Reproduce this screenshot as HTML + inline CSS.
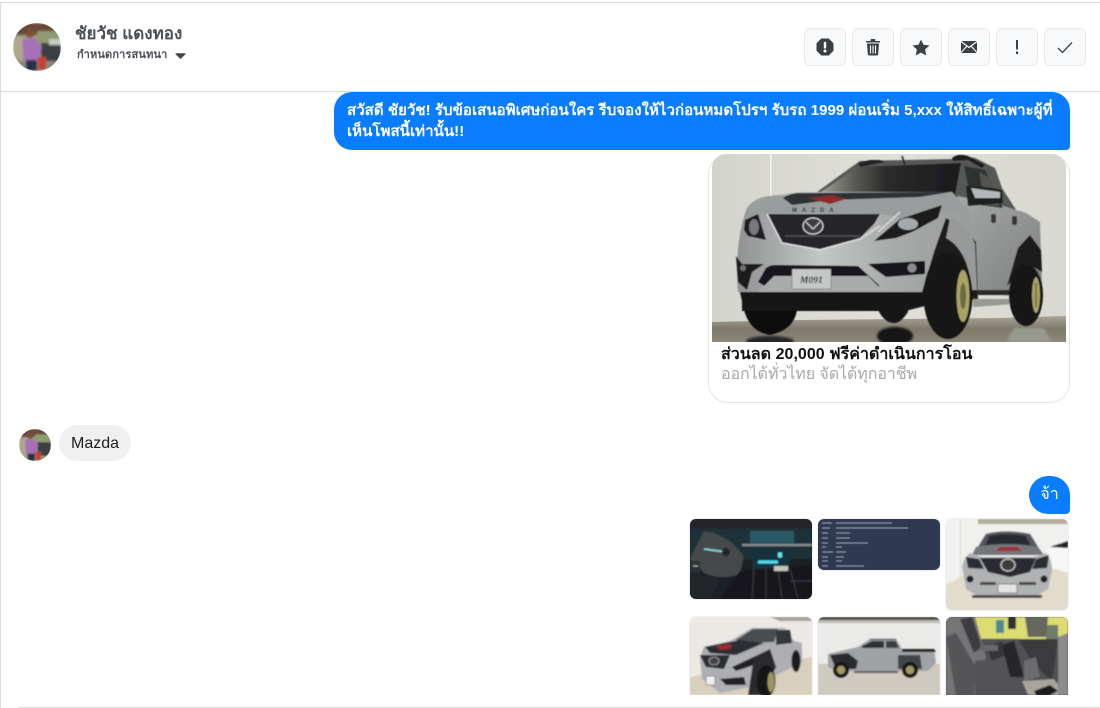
<!DOCTYPE html>
<html><head><meta charset="utf-8">
<style>
html,body{margin:0;padding:0;background:#fff}
body{width:1100px;height:708px;overflow:hidden;position:relative;font-family:"Liberation Sans",sans-serif}
.a{position:absolute}
.btn{position:absolute;top:28px;width:40px;height:36px;background:#f8f9fa;border:1px solid #e8e9ea;border-radius:6px;display:flex;align-items:center;justify-content:center}
.th{position:absolute;width:122px;overflow:hidden;border-radius:6px;box-shadow:0 0 0 1px rgba(0,0,0,.06)}
.th svg{display:block}
</style></head><body>
<svg width="0" height="0" style="position:absolute"><defs>
<filter id="b2"><feGaussianBlur stdDeviation=".7"/></filter>
<filter id="b1"><feGaussianBlur stdDeviation=".55"/></filter>
<filter id="b3" x="-10%" y="-10%" width="120%" height="120%"><feGaussianBlur stdDeviation="1.100"/></filter>
</defs></svg>
<div class="a" style="left:0;top:2px;width:1100px;height:1px;background:#ddd"></div>
<div class="a" style="left:0;top:2px;width:1px;height:706px;background:#ddd"></div>
<div class="a" style="left:1px;top:91px;width:1099px;height:1px;background:#ddd"></div>
<div class="a" style="left:18px;top:707px;width:1082px;height:1px;background:#ddd"></div>

<svg class="a" style="left:13px;top:23px" width="48" height="48" viewBox="0 0 48 48"><defs><clipPath id="c1"><circle cx="24" cy="24" r="24"/></clipPath></defs><g clip-path="url(#c1)"><g filter="url(#b3)"><rect width="48" height="48" fill="#9b9a84"/><rect y="0" width="48" height="12" fill="#6a4a3a"/><rect x="24" y="8" width="24" height="14" fill="#8f9a70"/><rect x="28" y="20" width="20" height="20" fill="#3a3f42"/><rect x="36" y="16" width="12" height="6" fill="#c8ccc4"/><rect x="0" y="14" width="10" height="26" fill="#b0a68a"/><rect x="0" y="38" width="48" height="10" fill="#8a887c"/><ellipse cx="17" cy="10" rx="4.500" ry="5" fill="#7c5034"/><path d="M9 17L22 15L29 24L25 38H11Z" fill="#a86fb8"/><rect x="13" y="37" width="11" height="11" fill="#26304a"/><rect x="25" y="34" width="8" height="13" fill="#c9412f"/></g></g></svg>
<div class="a" style="left:75px;top:24px;font-size:17px;font-weight:700;color:#4b4f56;line-height:20px;white-space:nowrap">ชัยวัช แดงทอง</div>
<div class="a" style="left:77px;top:48px;font-size:11px;font-weight:700;color:#4b4f56;line-height:14px;white-space:nowrap;letter-spacing:.15px">กำหนดการสนทนา</div>
<svg class="a" style="left:175px;top:53px" width="11" height="6" viewBox="0 0 11 6"><path d="M1 .8H10L5.500 5.200Z" fill="#444" stroke="#444" stroke-width="1.200" stroke-linejoin="round"/></svg>

<div class="btn" style="left:804px"><svg width="18" height="18" viewBox="0 0 18 18"><path d="M5.500 1H12.500L17 5.500V12.500L12.500 17H5.500L1 12.500V5.500Z" fill="#3d4043" stroke="#3d4043" stroke-width="1" stroke-linejoin="round"/><rect x="7.800" y="3.800" width="2.400" height="6.800" rx="1" fill="#fff"/><circle cx="9" cy="13" r="1.500" fill="#fff"/></svg></div>
<div class="btn" style="left:852px"><svg width="16" height="18" viewBox="0 0 16 18"><path d="M1 3H15V4.500H1ZM5.500 3L6 1H10L10.500 3Z" fill="#3d4043"/><path d="M2 5.500H14L13.200 16.300Q13 17.500 11.800 17.500H4.200Q3 17.500 2.800 16.300Z" fill="#3d4043"/><path d="M5.500 7.500V15.500M8 7.500V15.500M10.500 7.500V15.500" stroke="#fff" stroke-width="1.100"/></svg></div>
<div class="btn" style="left:900px"><svg width="18" height="17" viewBox="0 0 18 17"><path d="M9 0.500L11.500 5.700L17.500 6.500L13.100 10.500L14.300 16.500L9 13.600L3.700 16.500L4.900 10.500L0.500 6.500L6.500 5.700Z" fill="#3d4043"/></svg></div>
<div class="btn" style="left:948px"><svg width="16" height="12" viewBox="0 0 16 12"><rect width="16" height="12" rx="1" fill="#3d4043"/><path d="M0 .5L8 6.500L16 .5M0 11.500L6 5M16 11.500L10 5" stroke="#fff" stroke-width="1.100" fill="none"/></svg></div>
<div class="btn" style="left:996px"><svg width="4" height="14" viewBox="0 0 4 14"><rect x="1" y="0" width="2" height="9.500" fill="#3d4043"/><rect x="1" y="11.500" width="2" height="2.500" fill="#3d4043"/></svg></div>
<div class="btn" style="left:1044px"><svg width="16" height="13" viewBox="0 0 16 13"><path d="M1 7L5.500 11.500L15 1.500" stroke="#3d4043" stroke-width="1.300" fill="none"/></svg></div>

<div class="a" style="left:334px;top:92px;width:736px;height:58px;box-sizing:border-box;background:#0a7cff;border-radius:18px 18px 4px 18px;color:#fff;font-size:15px;font-weight:700;line-height:21px;padding:8px 13px;letter-spacing:.05px">สวัสดี ชัยวัช! รับข้อเสนอพิเศษก่อนใคร รีบจองให้ไวก่อนหมดโปรฯ รับรถ 1999 ผ่อนเริ่ม 5,xxx ให้สิทธิ์เฉพาะผู้ที่เห็นโพสนี้เท่านั้น!!</div>

<div class="a" style="left:708px;top:154px;width:362px;height:249px;box-sizing:border-box;border:1px solid #e4e4e4;border-top-color:#eee;border-radius:20px"></div>
<div class="a" style="left:712px;top:154px;width:354px;height:188px;overflow:hidden;border-radius:14px 14px 0 0">
<svg width="354" height="188" viewBox="712 154 354 188" style="display:block">
<defs>
<linearGradient id="wall" x1="0" x2="1" y1="0" y2="0"><stop offset="0" stop-color="#d4d4cd"/><stop offset=".5" stop-color="#e0e0d9"/><stop offset="1" stop-color="#d8d8d0"/></linearGradient>
<linearGradient id="floor" x1="0" x2="0" y1="0" y2="1"><stop offset="0" stop-color="#a8a498"/><stop offset=".5" stop-color="#7d7869"/><stop offset="1" stop-color="#8b8779"/></linearGradient>
<linearGradient id="front" x1="0" x2="1" y1="0" y2="0"><stop offset="0" stop-color="#8f9192"/><stop offset=".35" stop-color="#c4c6c6"/><stop offset=".65" stop-color="#a8aaaa"/><stop offset="1" stop-color="#9a9c9c"/></linearGradient>
<linearGradient id="side" x1="0" x2="1" y1="0" y2="1"><stop offset="0" stop-color="#a8aaa9"/><stop offset="1" stop-color="#7c7f7e"/></linearGradient>
<linearGradient id="glass" x1="0" x2="1" y1="0" y2="0"><stop offset="0" stop-color="#b0b3a6"/><stop offset=".28" stop-color="#5a5c56"/><stop offset=".5" stop-color="#2a2b2b"/><stop offset="1" stop-color="#1a1b1c"/></linearGradient>
</defs>
<rect x="712" y="154" width="354" height="188" fill="url(#wall)"/>
<rect x="770" y="154" width="1.500" height="50" fill="#f3f3ee"/>
<path d="M712 322L800 320L1000 318L1066 316V342H712Z" fill="url(#floor)"/>
<g filter="url(#b3)">
<path d="M1014 328L1044 328L1052 342H1006Z" fill="#97998f"/>
<ellipse cx="895" cy="336" rx="18" ry="9" fill="#191919"/>
<ellipse cx="770" cy="341" rx="24" ry="5" fill="#26262a"/>
</g>
<g filter="url(#b1)">
<!-- cab -->
<path d="M806 200L850 168L860 161L953 159L958 155L975 158L995 168L1002 188L1018 213L970 210L958 198Z" fill="#565856"/>
<path d="M952 158Q958 153 968 156L985 165L982 168L968 160L953 161Z" fill="#1e1e1e"/>
<path d="M858 163L870 160H880L885 162L860 167Z" fill="#222"/>
<path d="M812 198L858 167L961 163L955 195L880 192Z" fill="url(#glass)"/>
<path d="M902 156L905 165" stroke="#222" stroke-width="1.500"/>
<!-- side body -->
<path d="M958 196L1000 205L1026 213L1040 222L1042 290L1010 296L975 292L950 220Z" fill="url(#side)"/>
<path d="M964 166L985 170L1003 208L972 204Z" fill="#2f3031"/>
<path d="M979 172L990 178L1000 206L985 205Z" fill="#525250"/>
<path d="M966 186Q985 186 1002 190L1003 203L968 206Z" fill="#1f2021"/>
<path d="M971 188L1000 192L1000 198L975 198Z" fill="#b4b8b8"/>
<rect x="991" y="214" width="5" height="9" rx="2" fill="#383838"/><rect x="1012" y="216" width="5" height="9" rx="2" fill="#383838"/>
<!-- main body -->
<path d="M738 292C735 262 739 228 747 208Q755 197 770 196L800 192H952L970 212L976 292Z" fill="url(#front)"/>
<path d="M748 212Q755 198 770 196L950 192L965 210L905 218L880 214L760 213Z" fill="#9a9d9d"/>
<path d="M783 198Q790 193 800 193L950 192L920 197L830 200L792 205Z" fill="#2e3034"/>
<path d="M808 198L832 195L846 199L830 204Z" fill="#8f2a2f"/>
<text x="792" y="212" font-size="6" font-weight="700" letter-spacing="5" fill="#26262a" font-family="Liberation Sans">MAZDA</text>
<!-- grille -->
<path d="M768 214H880L874 224L860 238L820 249L782 243Z" fill="#26282c"/>
<path d="M767 214L782 243L820 250L860 239L880 226" fill="none" stroke="#dcdede" stroke-width="1.400"/>
<path d="M785 236H860" stroke="#55575a" stroke-width="1.200"/>
<ellipse cx="813" cy="226" rx="10" ry="8" fill="#3a3c40" stroke="#d4d6d6" stroke-width="1.200"/>
<path d="M806 222L813 229L820 222" fill="none" stroke="#ddd" stroke-width="1"/>
<!-- headlights -->
<path d="M745 220L758 214L766 240L748 236L744 230Z" fill="#1d1e20"/>
<ellipse cx="754" cy="227" rx="5" ry="8" fill="#77797c"/>
<path d="M874 241L900 219L942 205L938 218L912 232L896 238Z" fill="#1a1b1e"/>
<ellipse cx="908" cy="224" rx="10" ry="6" fill="#a4a9ad"/>
<path d="M878 232L900 212" stroke="#d8dada" stroke-width="1.500"/>
<!-- bumper dark -->
<path d="M736 256L738 282L747 290L752 272L764 264H742Z" fill="#1d1d1f"/>
<circle cx="743" cy="268" r="3" fill="#6f7070"/>
<path d="M766 268Q770 265 775 265L858 266L880 286L860 288H768L758 282Z" fill="#18181a"/>
<path d="M758 292L774 276H868L885 293Z" fill="#a9abab"/>
<path d="M868 264L925 261L925 274L886 277Z" fill="#18191a"/>
<circle cx="912" cy="268" r="5" fill="#8a8c8e" stroke="#222"/>
<rect x="792" y="269" width="39" height="20" fill="#c6c8c8" stroke="#777" stroke-width=".6"/>
<text x="800" y="283" font-size="9.500" font-weight="700" font-style="italic" fill="#1a1a1a" font-family="Liberation Serif">M091</text>
<!-- lower black -->
<path d="M740 292H797V310Q794 330 770 335Q750 332 744 310Z" fill="#101010"/>
<path d="M878 300H908V312Q900 324 893 323Q884 322 878 310Z" fill="#141414"/>
<path d="M742 292H925V306L905 311H742Z" fill="#121213"/>
<!-- flare / arch -->
<path d="M922 292L934 252L946 218L960 226L976 242L978 300L950 300Z" fill="#1c1d1e"/>
<path d="M950 218Q966 222 975 244L977 290L972 290Q968 250 946 238Z" fill="#97999a"/>
<path d="M1007 286L1018 248L1030 235L1041 250L1042 272L1028 264Z" fill="#1b1c1d"/>
<path d="M975 290H1013L1010 295H978Z" fill="#29292a"/>
<path d="M973 299H1016L1015 304L973 307Z" fill="#97998f"/>
<!-- wheels -->
<ellipse cx="948" cy="296" rx="24.500" ry="43" fill="#121212"/>
<ellipse cx="963" cy="296" rx="6.500" ry="26" fill="#a9a266"/>
<ellipse cx="963" cy="296" rx="3" ry="13" fill="#6d6a42"/>
<ellipse cx="1026" cy="295" rx="17" ry="31" fill="#121212"/>
<ellipse cx="1036" cy="295" rx="4" ry="18" fill="#a9a266"/>
<path d="M1036 283V307" stroke="#6d6a42" stroke-width="1.500"/>
</g>
</svg></div>
<div class="a" style="left:721px;top:345px;font-size:16px;font-weight:700;color:#111;line-height:20px;white-space:nowrap;letter-spacing:.04px">ส่วนลด 20,000 ฟรีค่าดำเนินการโอน</div>
<div class="a" style="left:721px;top:365px;font-size:16px;color:#a8a8a8;line-height:20px;white-space:nowrap;letter-spacing:-.08px">ออกได้ทั่วไทย จัดได้ทุกอาชีพ</div>

<svg class="a" style="left:19px;top:429px" width="32" height="32" viewBox="0 0 48 48"><defs><clipPath id="c2"><circle cx="24" cy="24" r="24"/></clipPath></defs><g clip-path="url(#c2)"><g filter="url(#b3)"><rect width="48" height="48" fill="#9b9a84"/><rect y="0" width="48" height="12" fill="#6a4a3a"/><rect x="24" y="8" width="24" height="14" fill="#8f9a70"/><rect x="28" y="20" width="20" height="20" fill="#3a3f42"/><rect x="0" y="14" width="10" height="26" fill="#b0a68a"/><ellipse cx="17" cy="10" rx="4.500" ry="5" fill="#7c5034"/><path d="M9 17L22 15L29 24L25 38H11Z" fill="#a86fb8"/><rect x="13" y="37" width="11" height="11" fill="#26304a"/><rect x="25" y="34" width="8" height="13" fill="#c9412f"/></g></g></svg>
<div class="a" style="left:59px;top:425px;width:72px;height:36px;background:#f0f0f0;border-radius:18px;font-size:16px;line-height:37px;text-align:center;color:#1c1e21">Mazda</div>

<div class="a" style="left:1029px;top:476px;width:41px;height:38px;background:#0a7cff;border-radius:19px 19px 4px 19px;color:#fff;font-size:16px;line-height:38px;text-align:center">จ้า</div>

<div class="a" style="left:0;top:510px;width:1100px;height:185px;overflow:hidden">
<!-- dash -->
<div class="th" style="left:690px;top:9px;height:80px"><svg width="122" height="80" viewBox="0 0 122 80"><rect width="122" height="80" fill="#1b2125"/><g filter="url(#b2)"><rect width="122" height="10" fill="#26282a"/><path d="M0 10H122V40H0Z" fill="#1f3038"/><path d="M0 40L14 12Q40 16 54 38L50 55Q30 62 14 54Z" fill="#44494b"/><path d="M14 30L36 33" stroke="#8fe3ee" stroke-width="1.500"/><circle cx="36" cy="33" r="4" fill="#23282a"/><path d="M52 26H122" stroke="#8a9092" stroke-width="2.200"/><path d="M60 12H104V24H60Z" fill="#2c5a68"/><path d="M62 30H100V50H62Z" fill="#12303c"/><path d="M68 43H88" stroke="#4fdcf0" stroke-width="3"/><path d="M88 36H92" stroke="#6ee" stroke-width="5"/><path d="M50 52L122 46V80H30Z" fill="#15181b"/><path d="M0 55L30 60L20 80H0Z" fill="#22272a"/><path d="M64 50L62 80M76 50L76 80M88 50L92 80M100 50L108 80" stroke="#343a3b" stroke-width="1.200"/><rect x="84" y="47" width="14" height="5" fill="#c4c7b8"/><rect x="0" y="42" width="10" height="12" fill="#2c3337"/><path d="M3 47H8" stroke="#bbb"/><path d="M100 62H122" stroke="#556" opacity=".6"/></g></svg></div>
<!-- info -->
<div class="th" style="left:818px;top:9px;height:51px"><svg width="122" height="51" viewBox="0 0 122 51"><rect width="122" height="51" fill="#2f3a52"/><g stroke="#b4bac6" stroke-width="1" filter="url(#b1)" opacity=".9"><path d="M4 4H14M18 4H74"/><path d="M4 9H12M18 9H90"/><path d="M4 14H10M18 14H32"/><path d="M4 19H10M18 19H32"/><path d="M4 24H10M18 24H50"/><path d="M4 28H8M18 28H24"/><path d="M4 33H15M18 33H28"/><path d="M4 38H10M18 38H26"/><path d="M4 42H10M18 42H24"/><path d="M4 47H10M18 47H46"/></g></svg></div>
<!-- front -->
<div class="th" style="left:946px;top:9px;height:91px"><svg width="122" height="91" viewBox="0 0 122 91"><rect width="122" height="91" fill="#f0f0ee"/><g filter="url(#b2)"><path d="M32 0H122V5H32Z" fill="#b5ae9e"/><rect x="14" y="0" width="1" height="62" fill="#d9d9d6"/><path d="M0 66L30 50H122V91H0Z" fill="#e3dbcc"/><path d="M100 32Q110 24 122 22V54L104 48Z" fill="#f7f7f7"/><path d="M104 28L122 22V29Z" fill="#222"/><path d="M32 28L40 15Q60 10 84 15L92 28Z" fill="#55575a"/><path d="M39 27L43 17Q60 13 80 17L85 27Z" fill="#2a2c30"/><path d="M30 28Q60 22 92 28L98 36H26Z" fill="#75777a"/><path d="M50 32H76L72 28H54Z" fill="#9c3034"/><path d="M16 48Q18 38 24 34L36 38H88L100 34Q106 40 106 52L102 70L92 76H30L20 70Z" fill="#b0b2b4"/><path d="M34 39H90L84 53L64 58L42 53Z" fill="#2a2c30"/><ellipse cx="62" cy="46" rx="7" ry="6" fill="#3b3d40" stroke="#e0e0e0"/><path d="M20 38L33 40L38 50L22 49Z" fill="#2b2d30"/><path d="M90 40L103 36L101 49L86 50Z" fill="#2b2d30"/><rect x="52" y="65" width="19" height="9" fill="#e4e4e3" stroke="#333" stroke-width=".5"/><circle cx="24" cy="60" r="3.500" fill="#222"/><circle cx="98" cy="60" r="3.500" fill="#222"/><path d="M34 63H50V66H34ZM73 63H90V66H73Z" fill="#444"/><path d="M26 76H96V79H26Z" fill="#4a4a4a"/></g></svg></div>
<!-- three quarter -->
<div class="th" style="left:690px;top:107px;height:78px;border-radius:6px 6px 0 0"><svg width="122" height="78" viewBox="0 0 122 78"><rect width="122" height="78" fill="#ece9e5"/><g filter="url(#b2)"><path d="M0 60L122 40V78H0Z" fill="#d8cfbc"/><path d="M80 0H122V4H90Z" fill="#a9a399"/><path d="M40 24L62 11H95L104 24L112 26L112 46L60 70L30 76L12 62L10 40L14 30Z" fill="#adafb2"/><path d="M46 23L63 12L88 12L84 25L50 26Z" fill="#4a4d50"/><path d="M86 13H100L102 26L86 28Z" fill="#35373a"/><path d="M15 30L50 23L74 26L46 38L20 36Z" fill="#2b2d31"/><path d="M26 29L42 27L40 32L30 33Z" fill="#a32a2c"/><path d="M10 38L40 38L34 52L16 50Z" fill="#2c2e32"/><ellipse cx="24" cy="44" rx="5" ry="4" fill="#444" stroke="#ccc" stroke-width=".6"/><path d="M42 50L72 36L64 48L46 54Z" fill="#222"/><path d="M64 40L80 32L86 50L72 78H58Z" fill="#2a2c2e"/><ellipse cx="76" cy="64" rx="9.500" ry="16" fill="#181818"/><ellipse cx="81" cy="65" rx="3.500" ry="10" fill="#9d9560"/><ellipse cx="106" cy="44" rx="4.500" ry="11" fill="#1b1b1b"/><rect x="16" y="59" width="9" height="9" fill="#eee" stroke="#333" stroke-width=".4"/><path d="M30 62L54 60L56 68H36Z" fill="#222"/></g></svg></div>
<!-- side -->
<div class="th" style="left:818px;top:107px;height:78px;border-radius:6px 6px 0 0"><svg width="122" height="78" viewBox="0 0 122 78"><rect width="122" height="78" fill="#eaeae8"/><g filter="url(#b2)"><rect width="122" height="3" fill="#4f4a3e"/><rect y="3" width="122" height="3" fill="#bdbdb8"/><rect y="47" width="122" height="31" fill="#cfcac0"/><path d="M10 37L40 30L52 22H78L84 32H116L118 46L110 54H20L10 50Z" fill="#a0a3a6"/><path d="M44 29L54 24H66V31H44Z" fill="#2e3034"/><path d="M68 24H78L81 31H68Z" fill="#3a3c3f"/><path d="M52 22H78V23H52Z" fill="#222"/><path d="M84 32H116L118 35H84Z" fill="#222"/><path d="M12 38L30 36L40 44L38 52L18 52Z" fill="#2a2c2e"/><path d="M80 38L102 38L104 52H80Z" fill="#2a2c2e" opacity=".8"/><circle cx="23" cy="53" r="8" fill="#181818"/><circle cx="23" cy="53" r="4.200" fill="#a29a66"/><circle cx="92" cy="53" r="8" fill="#181818"/><circle cx="92" cy="53" r="4.200" fill="#a29a66"/><rect x="36" y="54" width="44" height="2" fill="#55575a"/></g></svg></div>
<!-- seats -->
<div class="th" style="left:946px;top:107px;height:78px;border-radius:6px 6px 0 0"><svg width="122" height="78" viewBox="0 0 122 78"><rect width="122" height="78" fill="#505154"/><g filter="url(#b2)"><path d="M29 0H122V22H29Z" fill="#dcdc72"/><path d="M50 3H58V16H50Z" fill="#4b8a93"/><path d="M100 8H112V22H100Z" fill="#6f7c6a"/><path d="M62 0H70V12H62Z" fill="#2f3033"/><path d="M0 0H29L40 40L29 78H0Z" fill="#737476"/><path d="M14 2L26 0L36 30L28 36Z" fill="#3c3d40"/><path d="M0 20L10 16L30 50L28 78H10Z" fill="#545558"/><path d="M29 44L58 40L76 72L78 78H29Z" fill="#525357"/><path d="M40 30L56 24L60 38L46 44Z" fill="#35363a"/><path d="M34 28H52V34H34Z" fill="#66676a"/><path d="M56 28L68 24L78 60L64 60Z" fill="#26272a"/><path d="M79 0H102L100 20H82Z" fill="#66675f"/><path d="M72 22H112L106 64L88 48Z" fill="#3a3b3e"/><path d="M78 44L90 40L94 60L78 64Z" fill="#6a6c6f"/><path d="M76 64L108 62L120 78H82Z" fill="#a8a69c"/><path d="M88 74L104 68L112 74L104 78H90Z" fill="#1a1a1c"/><path d="M112 20L122 16V78H112Z" fill="#8a8b8a"/></g></svg></div>
</div>
</body></html>
